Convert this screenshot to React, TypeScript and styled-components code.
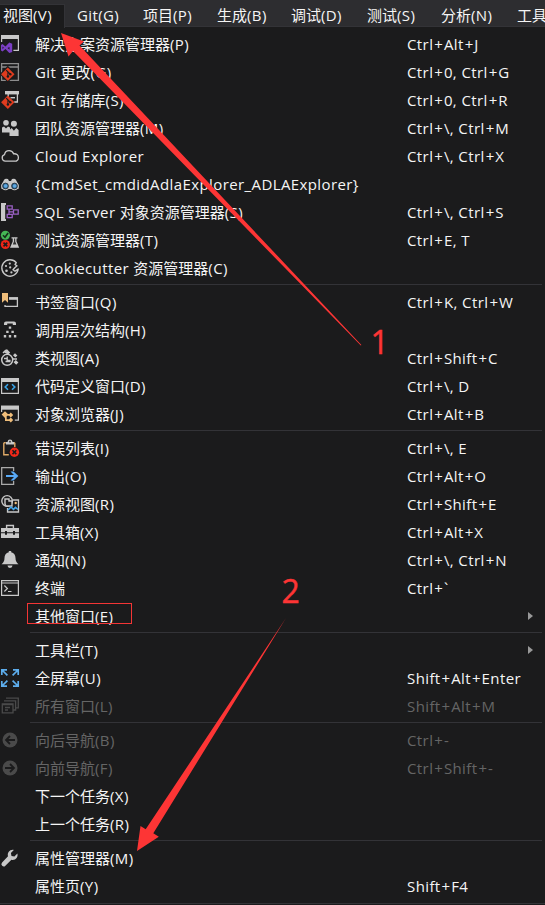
import React from 'react';
import styled, { createGlobalStyle } from 'styled-components';

const GlobalStyle = createGlobalStyle`
  html, body { margin: 0; padding: 0; background: #1b1b1c; overflow: hidden; }
  * { box-sizing: border-box; }
`;

const Window = styled.div`
  position: relative;
  width: 545px;
  height: 905px;
  overflow: hidden;
  background: #1b1b1c;
  color: #f5f5f5;
  font: 15px/20px "Open Sans", "Noto Sans CJK SC", sans-serif;
`;

const MenuBar = styled.nav`
  display: flex;
  align-items: stretch;
  height: 27px;
  padding-top: 4px;
  background: #2d2d30;
  border-bottom: 1px solid #333337;
`;

const BarSlot = styled.div<{ $width: number }>`
  flex: 0 0 ${p => p.$width}px;
  display: flex;
`;

const BarItem = styled.div<{ $active?: boolean }>`
  flex: none;
  width: ${p => (p.$active ? 65 : 60)}px;
  height: ${p => (p.$active ? 24 : 22)}px;
  padding: 0 0 0 3px;
  line-height: 21px;
  white-space: nowrap;
  background: ${p => (p.$active ? '#1b1b1c' : 'transparent')};
  border: solid ${p => (p.$active ? '#333337' : 'transparent')};
  border-width: 1px 1px 0 0;
`;

const Menu = styled.div`
  padding-top: 3px;
  height: 877px;
  border-bottom: 1px solid #333337;
`;

const Row = styled.div<{ $disabled?: boolean }>`
  display: grid;
  grid-template-columns: 34px 372px 121px 1fr;
  align-items: center;
  height: 28px;
  padding-left: 1px;
  white-space: nowrap;
  color: ${p => (p.$disabled ? '#656565' : '#f5f5f5')};
`;

const Label = styled.span`
  line-height: 28px;
  height: 28px;
`;

const Latin = styled.span`
  letter-spacing: 0.4px;
`;

const Plus = styled.span`
  margin: 0 1px;
`;

const Separator = styled.div`
  height: 6px;
  padding: 2px 3px 0 30px;
  &::before {
    content: '';
    display: block;
    height: 1px;
    background: #333337;
  }
`;

const SubmenuArrow = styled.span`
  width: 0;
  height: 0;
  border: solid transparent;
  border-width: 4.5px 0 4.5px 5px;
  border-left-color: #999;
`;

const Glyph = styled.svg`
  display: block;
  width: 18px;
  height: 18px;
  overflow: visible;
`;

const Annotations = styled.svg`
  position: absolute;
  inset: 0;
  width: 545px;
  height: 905px;
  fill: #fd3535;
`;

const Highlight = styled.div`
  position: absolute;
  left: 27px;
  top: 603px;
  width: 105px;
  height: 21px;
  border: 1px solid #f33535;
`;

const Digit = styled.span<{ $x: number; $y: number }>`
  position: absolute;
  left: ${p => p.$x}px;
  top: ${p => p.$y}px;
  font-size: 32px;
  line-height: 32px;
  color: #fd3535;
  -webkit-text-stroke: 0.4px #fd3535;
`;

const G = '#c8c8c8';
const RED = '#e03c1f';

const gitMark = (
  <>
    <path d="M6.8 4.5 13.5 11.2 6.8 17.9 .1 11.2Z" fill={RED} />
    <path d="M5.2 7.2 9 11M6.9 8.8v5" stroke="#1b1b1c" strokeWidth="1.1" fill="none" />
    <circle cx="6.9" cy="13.5" r="1.2" fill="#1b1b1c" />
    <circle cx="9.3" cy="11.2" r="1.2" fill="#1b1b1c" />
  </>
);

const icons: Record<string, React.ReactNode> = {
  solution: (
    <>
      <path d="M.6 7V.6h16.8v14.8h-5" fill="none" stroke={G} strokeWidth="1.2" />
      <path d="M0 0h18v4H0z" fill={G} />
      <path fillRule="evenodd" d="M0 10 1.5 9l3 2.4L8.3 7.5l2.9 1.2v8.2l-2.9 1.1-3.8-3.9-3 2.4L0 15.5Zm1.5 1.6v2.5l1.4-1.3Zm7 .3-2 1 2 1.8Z" fill="#7b3fc4" />
    </>
  ),
  gitChanges: (
    <>
      <path d="M.6.6h16.8v16.8H.6zM0 4h18" fill="none" stroke="#8d8d8d" strokeWidth="1.3" />
      <path d="M6.8 2.8 15 11.2 6.8 19.4-1.4 11.2Z" fill="#1b1b1c" />
      {gitMark}
    </>
  ),
  gitRepo: (
    <>
      <path d="M4 0h14v3.4H4z" fill={G} />
      <path d="M7.2 3v3M16.4 3v8h-3.2" fill="none" stroke={G} strokeWidth="1.3" />
      <path d="M9.5 6h4.5v1.4H9.5z" fill={G} />
      {gitMark}
    </>
  ),
  team: (
    <g fill={G}>
      <circle cx="5" cy="3.8" r="2.8" />
      <circle cx="12.9" cy="4.7" r="3" />
      <path d="M1 8.4l2-1 2 2 2-2 2 1v5H1zM8.5 11l2.2-2 2.2 2.8L15.2 9l2.4 2v6H8.5z" />
    </g>
  ),
  cloud: (
    <path d="M4.3 14.2A3.4 3.4 0 0 1 3.5 7.6C4 5 6 3.7 8.1 3.7c2.2 0 3.8 1.1 4.5 3.1 2.8-.3 4.8 1.2 4.8 3.6s-1.6 3.8-3.8 3.8Z" fill="none" stroke={G} strokeWidth="1.3" />
  ),
  binoculars: (
    <>
      <path d="M3 5q1-2 4-1l1 2h2l1-2q3-1 4 1l2.5 5v4h-17v-4z" fill={G} />
      <circle cx="4.5" cy="11" r="4.3" fill={G} />
      <circle cx="13.5" cy="11" r="4.3" fill={G} />
      <circle cx="4.5" cy="11" r="2.9" fill="#2d6b9d" stroke="#1b1b1c" strokeWidth=".7" />
      <circle cx="13.5" cy="11" r="2.9" fill="#2d6b9d" stroke="#1b1b1c" strokeWidth=".7" />
      <circle cx="4.7" cy="11" r="1.8" fill="#62a9df" />
      <circle cx="13.7" cy="11" r="1.8" fill="#62a9df" />
    </>
  ),
  sql: (
    <>
      <path d="M0 0h5v2h-.8v14H5v2H0z" fill={G} />
      <path d="M6.2 2.9h5v3.3h-5zM6.2 11.3h5v3.3h-5zM12.5 6.8h4.7v4.4h-4.7zM8 6v5.3M8 8.8h4.5" fill="none" stroke="#9a60c4" strokeWidth="1.3" />
    </>
  ),
  tests: (
    <>
      <circle cx="4.4" cy="4.2" r="4.5" fill="#45b755" />
      <path d="M2 4.3 4 6.3 7.1 2" fill="none" stroke="#142d18" strokeWidth="1.6" />
      <circle cx="4.4" cy="13.5" r="4.6" fill="#ee2517" />
      <path d="m2.5 11.6 3.8 3.8m0-3.8-3.8 3.8" stroke="#1b1b1c" strokeWidth="1.6" />
      <path d="M10.5 6.2h6v1.3h-1v3l2.7 6.2H9l2.7-6.2v-3h-1.2z" fill={G} />
      <path d="M13 7.5h1.2v3l1.3 3h-3.7l1.2-3z" fill="#333" />
    </>
  ),
  cookie: (
    <>
      <path d="M17.2 10A8.2 8.2 0 1 1 15.3 3.6L14 5.5l2 1.3-2.2 1.9L12 10.8l2 1.4Z" fill="none" stroke={G} strokeWidth="1.4" strokeLinejoin="round" />
      <g fill={G}>
        <circle cx="8.8" cy="4.6" r="1.1" /><circle cx="5" cy="7" r="1.1" /><circle cx="9.2" cy="8.4" r="1.1" />
        <circle cx="5.5" cy="11.8" r="1.3" /><circle cx="10.4" cy="13.4" r="1.1" />
      </g>
    </>
  ),
  bookmark: (
    <>
      <path d="M8 5h8.4v8.4H4V12" fill="none" stroke={G} strokeWidth="1.3" />
      <path d="M8 4.3h9v2.5H8z" fill={G} />
      <path d="M1 0h6v9.7L4 7 1 9.7z" fill="#efbd7a" />
    </>
  ),
  hierarchy: (
    <g fill={G}>
      <path d="M3 4V2.4Q3 .6 5 .6h8q2 0 2 1.8V4h-3.2V2.6H6.2V4z" />
      <path d="M7.8 5.5h2.4v2.2H7.8zM5.2 9.7h2.4v2.2H5.2zM10.4 9.7h2.4v2.2h-2.4zM2.8 14h2.4v2.4H2.8zM7.8 14h2.4v2.4H7.8zM12.9 14h2.4v2.4h-2.4z" />
    </g>
  ),
  classView: (
    <>
      <path d="m5.8 0 3.4 3.4-2 2-4-2zM14 4.2l2.4 2.4-2 2L12 6.2zM14.8 11l2.6 2.6-2.2 2.2-2.6-2.6z" fill={G} />
      <circle cx="6.2" cy="10.8" r="5.5" fill="#1b1b1c" stroke={G} strokeWidth="1.5" />
      <path d="M6.2 7.5v3.8h3.4M3 9.5h3M4.5 12.5h5" fill="none" stroke={G} strokeWidth="1.3" />
      <path d="M2 4 5 1M12 10h4" stroke={G} strokeWidth="1.5" />
    </>
  ),
  code: (
    <>
      <path d="M.6 1.6h16.8v14.8H.6z" fill="none" stroke={G} strokeWidth="1.2" />
      <path d="M0 1h18v4H0z" fill={G} />
      <path d="M7 7.2 4.2 10 7 12.8m4-5.6 2.8 2.8-2.8 2.8" fill="none" stroke="#3ba4e7" strokeWidth="1.6" />
    </>
  ),
  objects: (
    <>
      <path d="M.6 7V1.4h16.8v13.8h-3.6" fill="none" stroke={G} strokeWidth="1.2" />
      <path d="M0 .7h18v4H0z" fill={G} />
      <path d="m4 6.2 3.4 3.4L4 13 .6 9.6zM9.8 7.6l2.4 2.4-2.4 2.4L7.4 10zM9.8 12.6l2.4 2.4-2.4 2.4L7.4 15zM4 9h5v1.7H4zM4 10h1.7v4.3H9V16H4z" fill="#efbd7a" />
    </>
  ),
  errors: (
    <>
      <path d="M2.8 3.8v12h5M13.8 3.8V8M2.8 3.8h2m7 0h2" fill="none" stroke="#dfaa68" strokeWidth="1.4" />
      <path d="M5 5.5V3h1.5Q6.7.6 9 .6T11.5 3H13v2.5z" fill={G} />
      <circle cx="9" cy="2.7" r=".9" fill="#333" />
      <circle cx="13.4" cy="13.2" r="4.7" fill="#f12919" />
      <path d="m11.5 11.3 3.8 3.8m0-3.8-3.8 3.8" stroke="#1b1b1c" strokeWidth="1.5" />
    </>
  ),
  output: (
    <>
      <path d="M12.6 4V.7H.7v16.6h11.9V14" fill="none" stroke="#aaa" strokeWidth="1.3" />
      <path d="M5 8h8L9.5 4.5h3L17.4 9l-4.9 4.6h-3L13 10H5z" fill="#58a9f6" />
    </>
  ),
  resource: (
    <>
      <path d="M11.5 5h6v12h-11v-4" fill="none" stroke={G} strokeWidth="1.3" />
      <circle cx="6.1" cy="5.9" r="5.3" fill="#1b1b1c" stroke={G} strokeWidth="1.4" />
      <path d="M4 9V4h4v2h3v5H5z" fill="#1b1b1c" stroke={G} strokeWidth="1.4" />
      <path d="m7 15 3-3 2.5 2.4 2-2L17 14.5" fill="none" stroke="#45a9ee" strokeWidth="1.6" />
      <circle cx="14.7" cy="8" r="1.2" fill="#efbd7a" />
    </>
  ),
  toolbox: (
    <>
      <path d="M5.6 5V2.5h6.8V5" fill="none" stroke={G} strokeWidth="1.4" />
      <path d="M0 5h18v4.2H0zM0 10.3h4v1.5h2v-1.5h6v1.5h2v-1.5h4V15H0z" fill={G} />
      <path d="M4 8h2v2H4zM12 8h2v2h-2z" fill="#1b1b1c" />
    </>
  ),
  bell: <path d="M7.8 0h2.4v1.3C13 2 14.5 4 14.5 7c0 3 1 4.5 3 6.2H.5C2.5 11.5 3.5 10 3.5 7c0-3 1.5-5 4.3-5.7zM6.5 14.5h5a2.5 2.5 0 0 1-5 0z" fill={G} />,
  terminal: (
    <>
      <path d="M.6 1.6h16.8v14.8H.6zM.6 4h16.8" fill="none" stroke={G} strokeWidth="1.2" />
      <path d="m3.4 6.5 3 3-3 3M7 12.5h3.5" fill="none" stroke={G} strokeWidth="1.2" />
    </>
  ),
  fullscreen: (
    <g fill="none" stroke="#5dadec" strokeWidth="1.7">
      <path d="M.8 6V.9H6M1 1l5.4 5.4M12 .9h5.2V6M17 1l-5.4 5.4M.8 12v5.1H6M1 17l5.4-5.4M12 17.1h5.2V12M17 17l-5.4-5.4" />
    </g>
  ),
  windows: (
    <g fill="none" stroke="#4a4a4a" strokeWidth="1.3">
      <path d="M5 1.2h12.3v9.6H15M3 3.8h11.6V13H12" />
      <path d="M1.3 7H12v8.8H1.3z" /><path d="M1 7.5h11M4 10.5h5M4 13h3" />
    </g>
  ),
  back: (
    <>
      <circle cx="9" cy="9" r="7.5" fill="#4a4a4a" />
      <path d="M14 9H5m4-4L5 9l4 4" fill="none" stroke="#1b1b1c" strokeWidth="1.8" />
    </>
  ),
  forward: (
    <>
      <circle cx="9" cy="9" r="7.5" fill="#4a4a4a" />
      <path d="M4 9h9M9 5l4 4-4 4" fill="none" stroke="#1b1b1c" strokeWidth="1.8" />
    </>
  ),
  wrench: <path d="M12.8.9 9.9 4l.6 2.9 2.9.6 3-3.1c1 4-2.2 7.3-6 6.3l-6 6a2.2 2.2 0 0 1-3.3-3.2L7 7.3C6 3.7 9 .1 12.8.9Z" fill={G} />,
};

type Item = { label: string; icon?: string; keys?: string; disabled?: boolean; submenu?: boolean };

const groups: Item[][] = [
  [
    { label: '解决方案资源管理器(P)', icon: 'solution', keys: 'Ctrl+Alt+J' },
    { label: 'Git 更改(G)', icon: 'gitChanges', keys: 'Ctrl+0, Ctrl+G' },
    { label: 'Git 存储库(S)', icon: 'gitRepo', keys: 'Ctrl+0, Ctrl+R' },
    { label: '团队资源管理器(M)', icon: 'team', keys: 'Ctrl+\\, Ctrl+M' },
    { label: 'Cloud Explorer', icon: 'cloud', keys: 'Ctrl+\\, Ctrl+X' },
    { label: '{CmdSet_cmdidAdlaExplorer_ADLAExplorer}', icon: 'binoculars' },
    { label: 'SQL Server 对象资源管理器(S)', icon: 'sql', keys: 'Ctrl+\\, Ctrl+S' },
    { label: '测试资源管理器(T)', icon: 'tests', keys: 'Ctrl+E, T' },
    { label: 'Cookiecutter 资源管理器(C)', icon: 'cookie' },
  ],
  [
    { label: '书签窗口(Q)', icon: 'bookmark', keys: 'Ctrl+K, Ctrl+W' },
    { label: '调用层次结构(H)', icon: 'hierarchy' },
    { label: '类视图(A)', icon: 'classView', keys: 'Ctrl+Shift+C' },
    { label: '代码定义窗口(D)', icon: 'code', keys: 'Ctrl+\\, D' },
    { label: '对象浏览器(J)', icon: 'objects', keys: 'Ctrl+Alt+B' },
  ],
  [
    { label: '错误列表(I)', icon: 'errors', keys: 'Ctrl+\\, E' },
    { label: '输出(O)', icon: 'output', keys: 'Ctrl+Alt+O' },
    { label: '资源视图(R)', icon: 'resource', keys: 'Ctrl+Shift+E' },
    { label: '工具箱(X)', icon: 'toolbox', keys: 'Ctrl+Alt+X' },
    { label: '通知(N)', icon: 'bell', keys: 'Ctrl+\\, Ctrl+N' },
    { label: '终端', icon: 'terminal', keys: 'Ctrl+`' },
    { label: '其他窗口(E)', submenu: true },
  ],
  [
    { label: '工具栏(T)', submenu: true },
    { label: '全屏幕(U)', icon: 'fullscreen', keys: 'Shift+Alt+Enter' },
    { label: '所有窗口(L)', icon: 'windows', keys: 'Shift+Alt+M', disabled: true },
  ],
  [
    { label: '向后导航(B)', icon: 'back', keys: 'Ctrl+-', disabled: true },
    { label: '向前导航(F)', icon: 'forward', keys: 'Ctrl+Shift+-', disabled: true },
    { label: '下一个任务(X)' },
    { label: '上一个任务(R)' },
  ],
  [
    { label: '属性管理器(M)', icon: 'wrench' },
    { label: '属性页(Y)', keys: 'Shift+F4' },
  ],
];

const barItems: [string, number][] = [
  ['视图(V)', 74], ['Git(G)', 66], ['项目(P)', 74], ['生成(B)', 74],
  ['调试(D)', 76], ['测试(S)', 74], ['分析(N)', 76], ['工具', 74],
];

function MixedText({ text }: { text: string }) {
  return (
    <>
      {text.split(/([\u4e00-\u9fff]+|\+)/).filter(Boolean).map((run, i) => {
        if (run === '+') return <Plus key={i}>+</Plus>;
        return /[\u4e00-\u9fff]/.test(run) ? <span key={i}>{run}</span> : <Latin key={i}>{run}</Latin>;
      })}
    </>
  );
}

export default function App() {
  return (
    <Window>
      <GlobalStyle />
      <MenuBar>
        {barItems.map(([label, width], i) => (
          <BarSlot key={label} $width={width}>
            <BarItem $active={i === 0}><MixedText text={label} /></BarItem>
          </BarSlot>
        ))}
      </MenuBar>
      <Menu>
        {groups.map((group, i) => (
          <React.Fragment key={i}>
            {i > 0 && <Separator />}
            {group.map(item => (
              <Row key={item.label} $disabled={item.disabled}>
                <span>{item.icon && <Glyph viewBox="0 0 18 18">{icons[item.icon]}</Glyph>}</span>
                <Label><MixedText text={item.label} /></Label>
                <Label>{item.keys && <MixedText text={item.keys} />}</Label>
                {item.submenu && <SubmenuArrow />}
              </Row>
            ))}
          </React.Fragment>
        ))}
      </Menu>
      <Highlight />
      <Annotations viewBox="0 0 545 905">
        <path d="M61 33 84 41.5 79.5 45.5 361.4 345 360.8 345.6 73 51 68.5 56.5Z" />
        <path d="M137 851 140.5 826 145.7 829.3 286 618 153.3 833.3 158.8 836.8Z" />
      </Annotations>
      <Digit $x={370.5} $y={326}>1</Digit>
      <Digit $x={281.5} $y={575}>2</Digit>
    </Window>
  );
}
